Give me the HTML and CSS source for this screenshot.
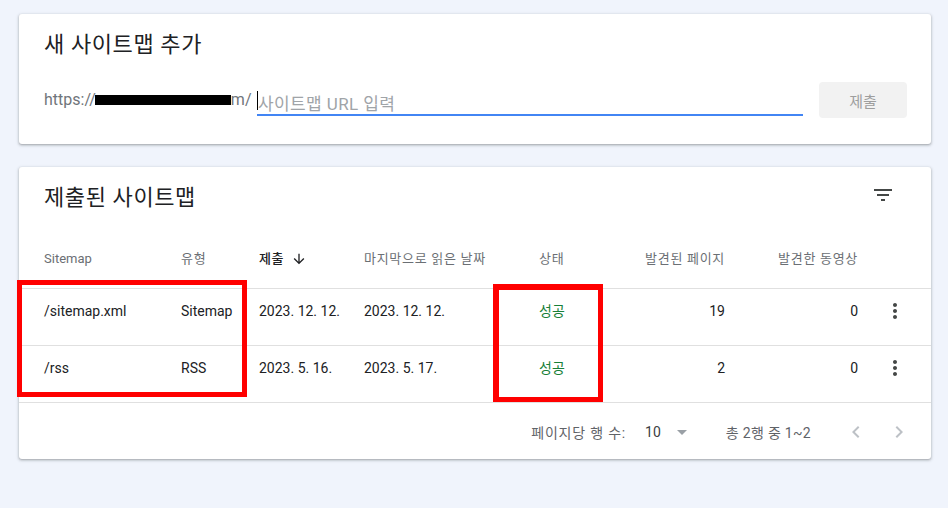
FILE: index.html
```html
<!DOCTYPE html>
<html lang="ko">
<head>
<meta charset="utf-8">
<title>Sitemaps</title>
<link rel="stylesheet" href="styles.css">
</head>
<body>
<main class="page">
  <section class="card add-card">
    <h2 class="card-title">새 사이트맵 추가</h2>
    <div class="url-row">
      <div class="url-prefix">https://<span class="redact"></span>m/</div>
      <div class="url-input"><span class="caret"></span><span class="placeholder">사이트맵 URL 입력</span></div>
      <button class="submit-btn" type="button">제출</button>
    </div>
  </section>

  <section class="card list-card">
    <div class="list-head">
      <h2 class="card-title">제출된 사이트맵</h2>
      <svg class="filter-icon" width="24" height="24" viewBox="0 0 24 24"><path d="M10 18h4v-2h-4v2zM3 6v2h18V6H3zm3 7h12v-2H6v2z"/></svg>
    </div>
    <div class="table">
      <div class="row head-row">
        <div class="cell">Sitemap</div>
        <div class="cell ko">유형</div>
        <div class="cell sorted">제출<svg class="sort-icon" width="16" height="16" viewBox="0 0 24 24"><path d="M20 12l-1.41-1.41L13 16.17V4h-2v12.17l-5.58-5.59L4 12l8 8 8-8z"/></svg></div>
        <div class="cell ko">마지막으로 읽은 날짜</div>
        <div class="cell ko">상태</div>
        <div class="cell num ko">발견된 페이지</div>
        <div class="cell num ko">발견한 동영상</div>
        <div class="cell"></div>
      </div>
      <div class="row data-row">
        <div class="cell">/sitemap.xml</div>
        <div class="cell">Sitemap</div>
        <div class="cell">2023. 12. 12.</div>
        <div class="cell">2023. 12. 12.</div>
        <div class="cell status">성공</div>
        <div class="cell num">19</div>
        <div class="cell num">0</div>
        <div class="cell action"><svg class="more-icon" width="24" height="24" viewBox="0 0 24 24"><path d="M12 8c1.1 0 2-.9 2-2s-.9-2-2-2-2 .9-2 2 .9 2 2 2zm0 2c-1.1 0-2 .9-2 2s.9 2 2 2 2-.9 2-2-.9-2-2-2zm0 6c-1.1 0-2 .9-2 2s.9 2 2 2 2-.9 2-2-.9-2-2-2z"/></svg></div>
      </div>
      <div class="row data-row">
        <div class="cell">/rss</div>
        <div class="cell">RSS</div>
        <div class="cell">2023. 5. 16.</div>
        <div class="cell">2023. 5. 17.</div>
        <div class="cell status">성공</div>
        <div class="cell num">2</div>
        <div class="cell num">0</div>
        <div class="cell action"><svg class="more-icon" width="24" height="24" viewBox="0 0 24 24"><path d="M12 8c1.1 0 2-.9 2-2s-.9-2-2-2-2 .9-2 2 .9 2 2 2zm0 2c-1.1 0-2 .9-2 2s.9 2 2 2 2-.9 2-2-.9-2-2-2zm0 6c-1.1 0-2 .9-2 2s.9 2 2 2 2-.9 2-2-.9-2-2-2z"/></svg></div>
      </div>
    </div>
    <div class="table-footer">
      <span class="rows-label">페이지당 행 수:</span>
      <span class="rows-value">10</span>
      <svg class="drop-icon" width="24" height="24" viewBox="0 0 24 24"><path d="M7 10l5 5 5-5z"/></svg>
      <span class="range">총 2행 중 1~2</span>
      <svg class="nav-icon prev" width="24" height="24" viewBox="0 0 24 24"><path d="M15.41 7.41L14 6l-6 6 6 6 1.41-1.41L10.83 12z"/></svg>
      <svg class="nav-icon next" width="24" height="24" viewBox="0 0 24 24"><path d="M10 6L8.59 7.41 13.17 12l-4.58 4.59L10 18l6-6z"/></svg>
    </div>
    <div class="mark mark-a"></div>
    <div class="mark mark-b"></div>
  </section>
</main>
</body>
</html>
```

FILE: styles.css
```css
* { box-sizing: border-box; margin: 0; padding: 0; }
html, body { background: #f0f4fc; }
body {
  font-family: Roboto, "Noto Sans CJK KR", sans-serif;
  color: #202124;
  width: 948px;
  height: 508px;
  overflow: hidden;
}
.page {
  padding: 14px 17px 0 19px;
  display: flex;
  flex-direction: column;
  gap: 23px;
}
.card {
  position: relative;
  width: 912px;
  background: #fff;
  border-radius: 3px;
  box-shadow: 0 1px 2px 0 rgba(60,64,67,.3), 0 1px 3px 1px rgba(60,64,67,.15);
}
.card-title {
  font-size: 22px;
  font-weight: 400;
  line-height: 28px;
  letter-spacing: 0.6px;
  color: #202124;
}

/* add card */
.add-card { height: 130px; padding: 17px 24px 0 25px; }
.url-row {
  display: flex;
  align-items: center;
  height: 36px;
  margin-top: 23px;
}
.url-prefix {
  display: flex;
  align-items: center;
  font-size: 16px;
  line-height: 20px;
  color: #70757a;
  white-space: nowrap;
}
.redact {
  display: inline-block;
  width: 136px;
  height: 10px;
  background: #000;
  margin-left: -1px;
}
.url-input {
  display: flex;
  align-items: center;
  width: 546px;
  height: 32px;
  margin-left: auto;
  padding-top: 3px;
  border-bottom: 2px solid #4285f4;
}
.caret { width: 1px; height: 19px; background: #000; }
.placeholder {
  font-size: 17px;
  letter-spacing: 0.4px;
  color: #a0a4a8;
  line-height: 20px;
  padding-top: 6px;
}
.submit-btn {
  width: 88px;
  height: 36px;
  margin-left: 16px;
  border: none;
  border-radius: 4px;
  background: #f2f2f2;
  color: #9e9e9e;
  font-family: inherit;
  font-size: 15px;
}

/* list card */
.list-head {
  display: flex;
  justify-content: space-between;
  align-items: flex-start;
  height: 65px;
  padding: 17px 36px 0 25px;
}
.filter-icon { fill: #444746; margin-top: -1px; }
.row {
  display: grid;
  grid-template-columns: 137px 78px 105px 175px 60px 126px 133px 73px;
  padding-left: 25px;
  border-bottom: 1px solid #e0e0e0;
  line-height: 20px;
}
.cell { white-space: nowrap; }
.num { text-align: right; }
.head-row {
  padding-top: 17px;
  padding-bottom: 19px;
  font-size: 13px;
  color: #6b6f74;
}
.ko { letter-spacing: 0.7px; }
.sorted {
  display: flex;
  align-items: center;
  gap: 7px;
  color: #202124;
  font-weight: 500;
  letter-spacing: 0.5px;
}
.sort-icon { fill: #202124; }
.data-row {
  padding-top: 12px;
  padding-bottom: 24px;
  font-size: 14px;
  color: #202124;
}
.status { color: #188038; }
.action { display: flex; justify-content: center; height: 20px; }
.more-icon { fill: #444746; margin-top: -2px; }

.table-footer {
  display: flex;
  align-items: center;
  justify-content: flex-end;
  height: 56px;
  padding: 1px 20px 0 0;
  font-size: 14px;
  color: #5f6368;
}
.rows-label { letter-spacing: 0.8px; }
.rows-value { margin-left: 19px; color: #3c4043; }
.drop-icon { fill: #9aa0a6; margin-left: 9px; }
.range { margin-left: 32px; letter-spacing: 0.3px; }
.nav-icon { fill: #bdc1c6; }
.prev { margin-left: 33px; }
.next { margin-left: 19px; }

/* annotation marks drawn over the screenshot */
.mark { position: absolute; border: 5px solid #ff0000; }
.mark-a { left: -2px; top: 113px; width: 230px; height: 117px; }
.mark-b { left: 474px; top: 117px; width: 110px; height: 118px; border-width: 6px 5px 5px 6px; }
```
